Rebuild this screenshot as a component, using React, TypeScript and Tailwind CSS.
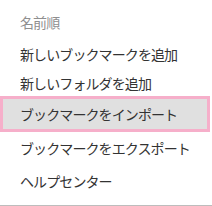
export default function App() {
  const font = { fontFamily: '"Noto Sans CJK JP", "Noto Sans", sans-serif' };
  return (
    <div
      className="w-[212px] h-[206px] bg-white flex flex-col overflow-hidden text-[14px] tracking-[-0.9px] leading-[20px]"
      style={font}
    >
      <div className="h-[37px] shrink-0 pt-[12px] pl-[20px] text-[#8f8f8f]">名前順</div>
      <div className="h-[33px] shrink-0 flex items-center pl-[20px] text-[#333]">新しいブックマークを追加</div>
      <div className="h-[26px] shrink-0 pt-[3px] pl-[20px] text-[#333]">新しいフォルダを追加</div>
      <div className="h-[36px] shrink-0 mr-[2px] flex items-center pl-[17px] text-[#333] bg-[#e0e0e0] border-[3px] border-[#f6afca]">
        ブックマークをインポート
      </div>
      <div className="h-[32px] shrink-0 flex items-center pl-[20px] text-[#333]">ブックマークをエクスポート</div>
      <div className="h-[33px] shrink-0 flex items-center pl-[20px] text-[#333]">ヘルプセンター</div>
      <div className="mt-auto h-px bg-[#bdbdbd]" />
    </div>
  );
}
